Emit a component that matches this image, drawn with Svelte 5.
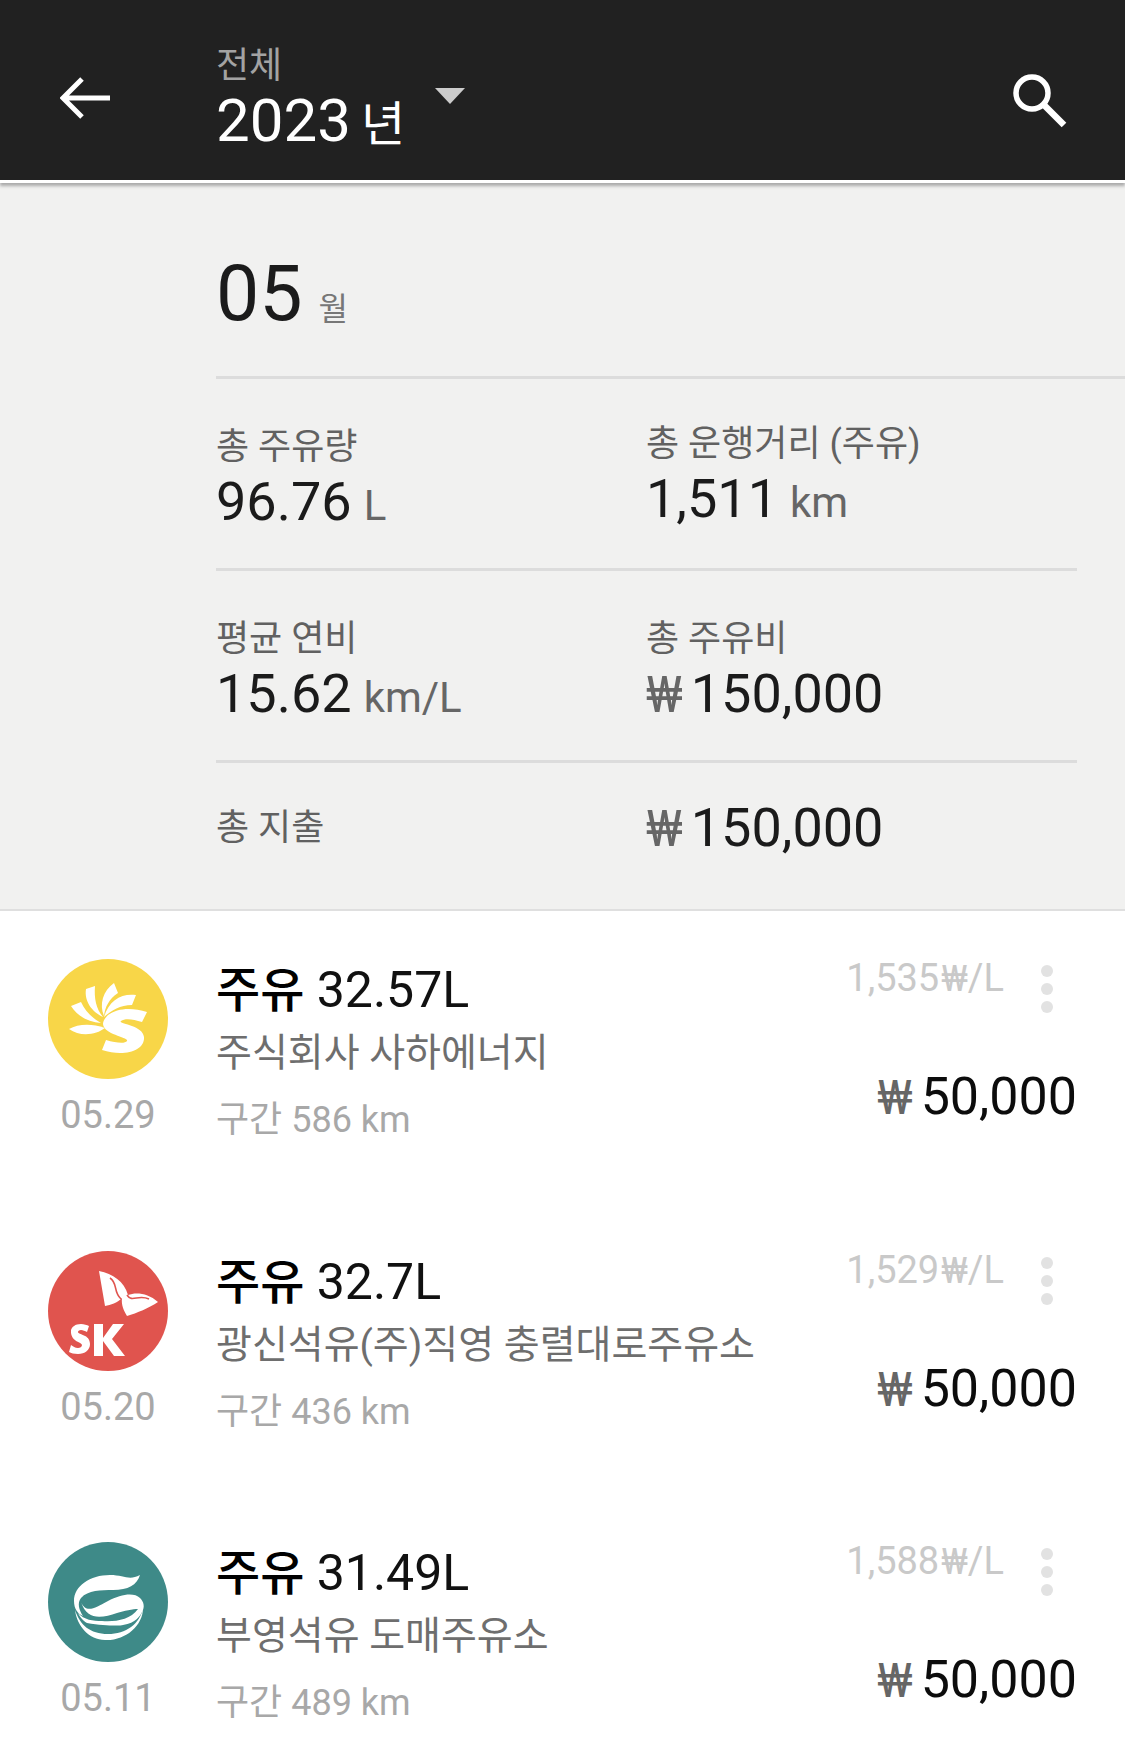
<script>
  const stats = [
    [{ label: '총 주유량', value: '96.76', unit: 'L' }, { label: '총 운행거리 (주유)', value: '1,511', unit: 'km', raised: true }],
    [{ label: '평균 연비', value: '15.62', unit: 'km/L' }, { label: '총 주유비', won: true, value: '150,000' }]
  ];
  const items = [
    { logo: 's', date: '05.29', amount: '32.57', name: '주식회사 사하에너지', dist: '586', price: '1,535' },
    { logo: 'sk', date: '05.20', amount: '32.7', name: '광신석유(주)직영 충렬대로주유소', dist: '436', price: '1,529' },
    { logo: 'b', date: '05.11', amount: '31.49', name: '부영석유 도매주유소', dist: '489', price: '1,588' }
  ];
</script>

<div class="page">
  <header class="bar">
    <svg class="back" viewBox="0 0 50 44" width="50" height="44"><path d="M22 3 3 22l19 19M3 22h47" fill="none" stroke="#fff" stroke-width="5"/></svg>
    <div class="period">
      <div class="scope">전체</div>
      <div class="year"><span>2023</span><small>년</small></div>
    </div>
    <svg class="caret" viewBox="0 0 30 16" width="30" height="16"><path d="M0 0h30L15 16z" fill="#ccc"/></svg>
    <svg class="search" viewBox="0 0 56 56" width="56" height="56"><circle cx="21" cy="21" r="16" fill="none" stroke="#fff" stroke-width="5.5"/><path d="M32 32l21 21" stroke="#fff" stroke-width="6.5" fill="none"/></svg>
  </header>

  <section class="summary">
    <div class="month"><span>05</span><small>월</small></div>
    {#each stats as row, i}
      <div class="row row{i}">
        {#each row as s}
          <div class="cell" class:raised={s.raised}>
            <div class="label">{s.label}</div>
            <div class="value">
              {#if s.won}<em class="won">₩</em>{/if}<span>{s.value}</span>{#if s.unit}<small>{s.unit}</small>{/if}
            </div>
          </div>
        {/each}
      </div>
    {/each}
    <div class="total">
      <div class="label">총 지출</div>
      <div class="value"><em class="won">₩</em><span>150,000</span></div>
    </div>
  </section>

  <ul class="list">
    {#each items as it}
      <li class="item">
        <div class="side">
          {#if it.logo === 's'}
            <svg viewBox="0 0 120 120" width="120" height="120">
              <circle cx="60" cy="60" r="60" fill="#f8d648"/>
              <g fill="#fff">
                <path d="M21 70c9-5 22-6 36-1-9 7-25 9-36 1z"/>
                <path d="M23 47l10-4c4 9 11 16 20 21-13-1-24-7-30-17z"/>
                <path d="M38 30l9-3c-1 12 1 23 8 31-11-5-19-16-17-28z"/>
                <path d="M66 24c-11 8-15 21-10 33 1-9 5-17 14-23z"/>
                <path d="M88 36c-14-2-27 5-32 22 8-7 16-12 28-12z"/>
                <path d="M60 56c9-7 24-8 39-3l-5 10c-9-3-17-4-21-1-4 3 22 4 23 16 1 14-20 20-42 13l4-10c10 3 19 4 21 1 2-4-23-6-24-17 0-3 2-6 5-9z"/>
              </g>
            </svg>
          {:else if it.logo === 'sk'}
            <svg viewBox="0 0 120 120" width="120" height="120">
              <circle cx="60" cy="60" r="60" fill="#e0544e"/>
              <path d="M51 20c14 3 25 10 29 24 8-3 20-2 30 7-9 6-21 11-31 14-3-5-6-11-5-18-5 5-11 7-17 8z" fill="#fff"/>
              <path d="M62 27c8 5 3 14 11 21M79 44c5 8 11-1 22 4" fill="none" stroke="#e0544e" stroke-width="1.6"/>
              <path d="M23 79c1-3 4-6 10-6 3 0 6 1 8 2l-2 6c-2-1-4-2-6-2-2 0-3 1-3 2 0 3 12 2 12 12 0 6-5 10-12 10-4 0-7-1-9-2l2-7c2 1 4 3 7 3 2 0 4-1 4-3 0-3-12-3-11-15zM46 73h9v14l10-14h11L64 88l13 17H66l-11-15v15h-9z" fill="#fff"/>
            </svg>
          {:else}
            <svg viewBox="0 0 120 120" width="120" height="120">
              <circle cx="60" cy="60" r="60" fill="#3e8a88"/>
              <path d="M92 33c-3 10-12 15-27 15-12 0-25 0-32 8-4 5-2 12 2 18-5-2-9-7-9-15 0-15 16-26 36-26 14 0 19 6 30 0z" fill="#fff"/>
              <path d="M33 60c5 12 14 6 27-1 13-7 26-9 32-3 4 4 5 9 2 14-2 4-6 11-19 13-3 1-18 1-36-2-2-1-7-5-9-10 6 7 15 8 24 8 13 1 28-1 36-12-5 0-14 2-21 4-15 5-30 8-36-11z" fill="#fff" />
              <path d="M27 68c5 15 15 24 33 24 18 0 32-10 35-26 0 18-18 33-38 32-16 0-28-14-30-30z" fill="#fff"/>
            </svg>
          {/if}
          <div class="date">{it.date}</div>
        </div>
        <div class="main">
          <div class="title"><b>주유</b> {it.amount}L</div>
          <div class="name">{it.name}</div>
          <div class="dist">구간 {it.dist} km</div>
        </div>
        <div class="right">
          <div class="unit-price">{it.price}<em>₩</em>/L</div>
          <div class="more"><i></i><i></i><i></i></div>
          <div class="price"><em class="won">₩</em><span>50,000</span></div>
        </div>
      </li>
    {/each}
  </ul>
</div>

<style>
  :global(body) { margin: 0; background: #fff; }
  .page {
    width: 1125px; height: 1758px; overflow: hidden;
    font-family: Roboto, "Noto Sans CJK KR", sans-serif;
    background: #fff;
  }
  em { font-style: normal; }
  .bar {
    position: relative;
    height: 180px; background: #212121;
    border-bottom: 3px solid #fff;
    box-shadow: 0 3px 3px #aaa;
    display: flex; align-items: flex-start;
    color: #fff;
    z-index: 1;
  }
  .back { margin: 76px 0 0 60px; flex: none; }
  .period { margin-left: 106px; }
  .scope { margin-top: 43px; font-size: 36px; line-height: 46px; color: #a3a3a3; }
  .year { font-size: 60px; line-height: 66px; display: flex; align-items: baseline; margin-top: -1px; }
  .year small { font-size: 48px; margin-left: 10px; }
  .caret { margin: 88px 0 0 30px; flex: none; }
  .search { margin: 72px 0 0 auto; margin-right: 58px; flex: none; }

  .summary {
    height: 726px; background: #f1f1f0;
    border-bottom: 2px solid #dfdfdf;
    padding-left: 216px;
    box-sizing: content-box;
  }
  .month {
    height: 196px; box-sizing: border-box;
    border-bottom: 3px solid #dcdcdc;
    padding-top: 68px;
    display: flex; align-items: baseline;
    color: #1b1b1b;
  }
  .month span { font-size: 77px; line-height: 86px; font-weight: 400; }
  .month small { font-size: 32px; color: #777; margin-left: 16px; }
  .row {
    display: grid; grid-template-columns: 430px 431px;
    width: 861px; height: 192px; box-sizing: border-box;
    border-bottom: 3px solid #dcdcdc;
    padding-top: 44px;
  }
  .cell.raised { margin-top: -3px; }
  .label { font-size: 36px; line-height: 48px; color: #616161; }
  .value { font-size: 54px; line-height: 62px; color: #1b1b1b; display: flex; align-items: baseline; }
  .value small { font-size: 42px; color: #666; margin-left: 12px; }
  .won { color: #666; margin-right: 8px; font-size: 0.92em; }
  .total {
    display: grid; grid-template-columns: 430px 431px; width: 861px;
    align-items: center; height: 130px; padding-bottom: 4px;
  }

  .list { list-style: none; margin: 0; padding: 0; }
  .item {
    height: 291.5px; display: flex; position: relative;
    box-sizing: border-box; padding-top: 48px;
  }
  .side { width: 216px; flex: none; padding-left: 48px; box-sizing: border-box; }
  .side svg { display: block; }
  .date { width: 120px; text-align: center; font-size: 38px; line-height: 46px; color: #a8a8a8; margin-top: 13px; }
  .main { flex: 1; min-width: 0; }
  .title { font-size: 50px; line-height: 66px; color: #111; margin-top: -2px; }
  .title b { font-weight: 500; font-size: 48px; color: #000; }
  .name { font-size: 39px; line-height: 54px; color: #6e6e6e; margin-top: 2px; }
  .dist { font-size: 36px; line-height: 48px; color: #a8a8a8; margin-top: 16px; }
  .right { width: 0; }
  .unit-price {
    position: absolute; right: 121px; top: 42px;
    font-size: 38px; line-height: 50px; color: #c9c9c9; white-space: nowrap;
  }
  .unit-price em { font-size: 36px; margin-left: 2px; }
  .more { position: absolute; left: 1041px; top: 54px; display: flex; flex-direction: column; gap: 6px; }
  .more i { width: 12px; height: 12px; border-radius: 50%; background: #e2e2e2; }
  .price {
    position: absolute; right: 48px; top: 155px;
    font-size: 52px; line-height: 62px; color: #0c0c0c; display: flex; align-items: baseline; white-space: nowrap;
  }
</style>
